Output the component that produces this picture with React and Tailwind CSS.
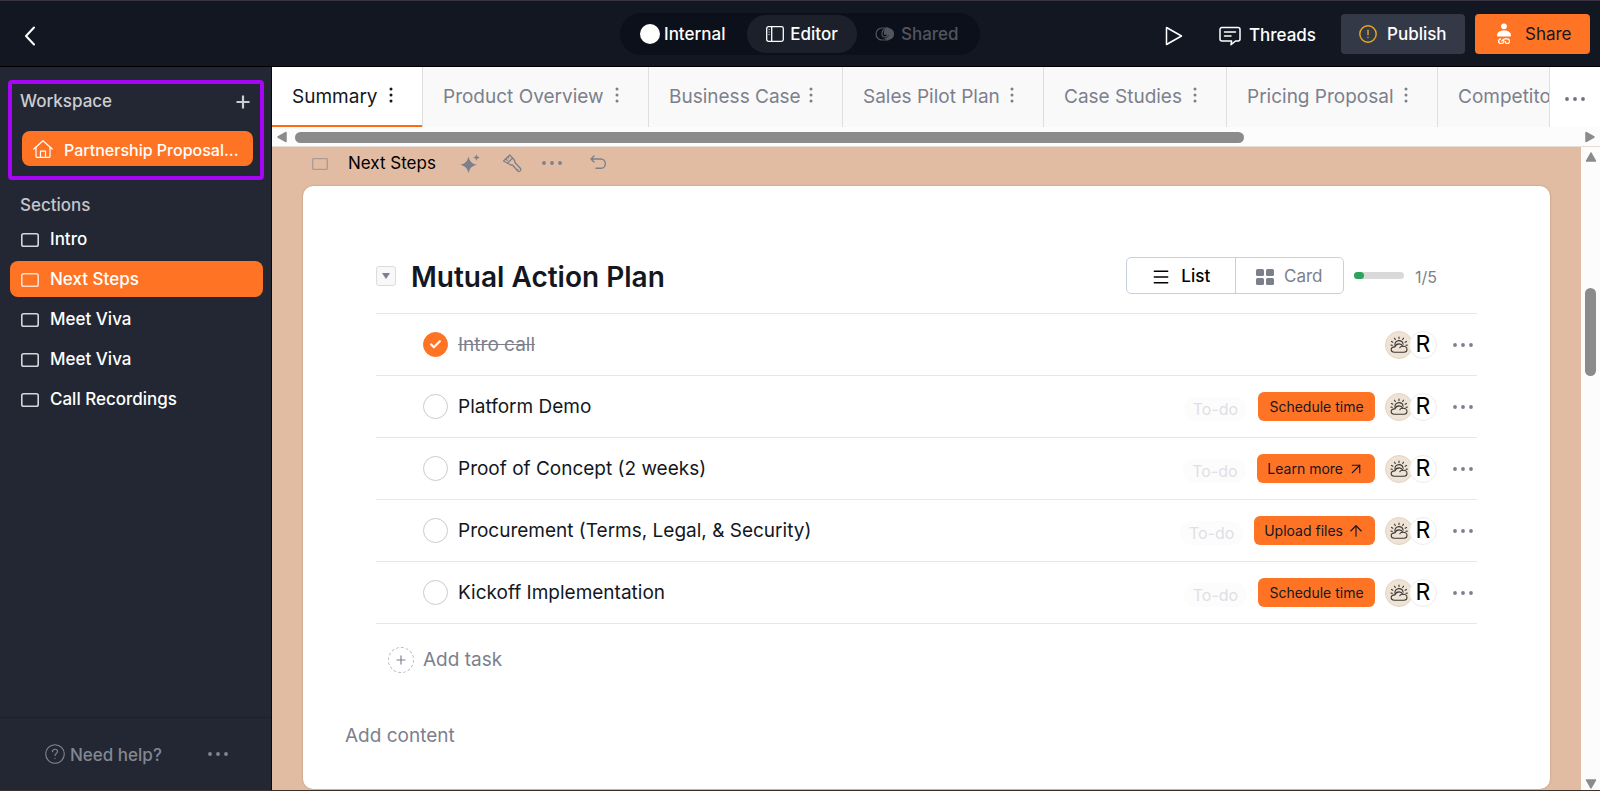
import React, { useState } from 'react';
import { Plus, Check, ArrowUpRight, ArrowUp, Menu } from 'lucide-react';
import clsx from 'clsx';

const TABS = [
  { name: 'Summary', width: 'w-[151px]' },
  { name: 'Product Overview', width: 'w-[226px]' },
  { name: 'Business Case', width: 'w-[194px]' },
  { name: 'Sales Pilot Plan', width: 'w-[201px]' },
  { name: 'Case Studies', width: 'w-[183px]' },
  { name: 'Pricing Proposal', width: 'w-[211px]' },
  { name: 'Competitors', width: 'w-[182px]' },
];

const SECTIONS = ['Intro', 'Next Steps', 'Meet Viva', 'Meet Viva', 'Call Recordings'];

const TASKS = [
  { id: 1, name: 'Intro call', done: true },
  { id: 2, name: 'Platform Demo', action: 'Schedule time' },
  { id: 3, name: 'Proof of Concept (2 weeks)', action: 'Learn more', icon: ArrowUpRight },
  { id: 4, name: 'Procurement (Terms, Legal, & Security)', action: 'Upload files', icon: ArrowUp },
  { id: 5, name: 'Kickoff Implementation', action: 'Schedule time' },
];

const Dots = ({ vertical, className }) => (
  <svg
    viewBox={vertical ? '0 0 4 16' : '0 0 20 4'}
    className={clsx('flex-shrink-0', vertical ? 'h-4 w-1' : 'h-1 w-5', className)}
    fill="currentColor"
    aria-hidden="true"
  >
    {vertical
      ? [2, 8, 14].map((y) => <circle key={y} cx="2" cy={y} r="1.5" />)
      : [2, 10, 18].map((x) => <circle key={x} cx={x} cy="2" r="1.9" />)}
  </svg>
);

const SlideIcon = ({ className }) => (
  <svg viewBox="0 0 18 14" className={clsx('h-3.5 w-[18px] flex-shrink-0', className)} fill="none" stroke="currentColor" strokeWidth="1.6" aria-hidden="true">
    <rect x="0.8" y="0.8" width="16.4" height="12.4" rx="1.8" />
  </svg>
);

const Arrow = ({ d, className }) => (
  <svg viewBox="0 0 12 12" className={clsx('h-3 w-3 flex-shrink-0', className)} fill="#8b8b8b" stroke="#8b8b8b" strokeWidth="1.5" strokeLinejoin="round" aria-hidden="true">
    <path d={d} />
  </svg>
);

const WeatherAvatar = () => (
  <svg viewBox="0 0 28 28" className="h-7 w-7" fill="none" aria-hidden="true">
    <circle cx="14" cy="14" r="13.5" fill="#efe3d6" stroke="#e3d3c3" />
    <g stroke="#3b3733" strokeWidth="1.1" strokeLinecap="round" strokeLinejoin="round">
      <path d="M9.5 21.300h9.300c2 0 3.200-1.300 3.200-3 0-2.100-1.900-3.400-4.200-3-.7-1.500-2-2.400-3.700-2.400-2 0-3.600 1.200-4.100 3-2.300-.3-3.800 1-3.800 2.700 0 1.600 1.300 2.700 3.300 2.700z" />
      <path d="M14.800 16.800c.4-.9 1.400-1.600 3-1.500" />
      <path d="M9.900 14.200c-.2-2.600 1.600-4.600 4-4.600 2.200 0 3.900 1.300 4.200 3.600" />
      <path d="M14 7.600V6M10.300 8.600l-.8-1.400M17.700 8.600l.8-1.400M7.900 11.200l-1.400-.8M20.100 11.200l1.400-.8M7.300 14.300l-1.300-.2M21 14.300l1.300-.2" />
    </g>
  </svg>
);

const Header = () => (
  <header className="flex h-[67px] flex-shrink-0 items-center justify-between border-t border-b border-t-[#3a3444] border-b-black bg-[#131722] px-2.5 text-[17px] font-medium text-white">
    <div className="flex flex-1 pt-1">
      <button aria-label="Back" className="ml-2 flex h-6 w-6 items-center justify-center">
        <svg viewBox="0 0 12 20" className="h-5 w-3" fill="none" stroke="currentColor" strokeWidth="2" strokeLinecap="round" strokeLinejoin="round" aria-hidden="true">
          <path d="M10 1.500L2 10l8 8.500" />
        </svg>
      </button>
    </div>

    <div className="flex h-[42px] items-center rounded-full bg-[#0c101a] px-0.5">
      <button className="flex h-[38px] w-[125px] items-center gap-1 pl-[18px]">
        <span className="h-5 w-5 rounded-full bg-white" />
        <span className="pt-0.5">Internal</span>
      </button>
      <button className="flex h-[38px] w-[110px] items-center justify-center gap-1.5 rounded-full bg-[#1c202b]">
        <svg viewBox="0 0 18 16" className="h-4 w-[18px]" fill="none" stroke="currentColor" strokeWidth="1.3" aria-hidden="true">
          <rect x="0.7" y="0.7" width="16.6" height="14.6" rx="1.8" />
          <path d="M5.700 0.700v14.600" />
          <path d="M2.500 3.500h1.200M2.500 6h1.200M2.500 8.500h1.200" strokeWidth="0.800" />
        </svg>
        <span className="pt-0.5">Editor</span>
      </button>
      <button className="flex h-[38px] w-[121px] items-center gap-1.5 pl-[18px] text-[#51555e]">
        <svg viewBox="0 0 20 14" className="h-3.5 w-5" fill="none" stroke="currentColor" strokeLinecap="round" aria-hidden="true">
          <path d="M13 1H7a6 6 0 0 0 0 12h6" strokeWidth="1.200" />
          <path d="M13 1a6 6 0 1 1-4 10.400c2.500.3 4.500-1.300 4.500-3.600H9.200C8.200 4.500 10 1 13 1z" fill="currentColor" stroke="none" />
          <path d="M13 1C8.500 1.200 7 4.500 7 6.500s1 3.500 2.500 3.500 3-.8 3.200-2.400" strokeWidth="1.200" />
        </svg>
        <span className="pt-0.5">Shared</span>
      </button>
    </div>

    <div className="flex flex-1 items-center justify-end">
      <button aria-label="Preview" className="mr-9 pt-1">
        <svg viewBox="0 0 18 20" className="h-5 w-[18px]" fill="none" stroke="currentColor" strokeWidth="1.500" strokeLinejoin="round" aria-hidden="true">
          <path d="M1.500 1.500v17L16.500 10z" />
        </svg>
      </button>
      <button className="mr-[25px] flex items-center gap-2 pt-1">
        <svg viewBox="0 0 22 20" className="h-5 w-[22px]" fill="none" stroke="currentColor" strokeWidth="1.500" strokeLinecap="round" strokeLinejoin="round" aria-hidden="true">
          <path d="M3 1.500h16a2 2 0 0 1 2 2v9.500a2 2 0 0 1-2 2h-2.500l-4.500 3.700.6-3.700H3a2 2 0 0 1-2-2V3.500a2 2 0 0 1 2-2z" />
          <path d="M5.500 6h11M5.500 10h6.500" />
        </svg>
        Threads
      </button>
      <button className="mr-2.5 flex h-10 w-[124px] items-center gap-2.5 rounded-[4px] bg-[#343948] pl-[18px]">
        <svg viewBox="0 0 18 18" className="h-[18px] w-[18px]" fill="none" stroke="#e8ab1c" strokeWidth="1.400" strokeLinecap="round" aria-hidden="true">
          <circle cx="9" cy="9" r="8.200" />
          <path d="M9 5.300v4.400M9 12.400v.1" />
        </svg>
        <span className="pt-0.5">Publish</span>
      </button>
      <button className="flex h-10 w-[115px] items-center gap-3.5 rounded-[4px] bg-[#ff7424] pl-[22px] font-normal text-[#131722]">
        <svg viewBox="0 0 14 22" className="h-[22px] w-3.5" fill="white" aria-hidden="true">
          <circle cx="7" cy="3.300" r="2.900" />
          <path d="M0 12.500c0-3.300 3-5 7-5s7 1.700 7 5c0 .6-.4.900-1 .9H1c-.6 0-1-.3-1-.9z" />
          <path d="M4 15.800a2.300 2.300 0 0 0 0 4.700c2.600 0 3.200-1.300 2.800-2.700-.3-1-.1-2 1.300-2h2a2.300 2.300 0 0 1 0 4.700c-1.500 0-2-.8-1.500-2.500M4.200 18.500c.9-.1 1.200-2.400 3-2.500" fill="none" stroke="white" strokeWidth="1.200" />
        </svg>
        <span className="pt-0.5">Share</span>
      </button>
    </div>
  </header>
);

const Sidebar = ({ active, onSelect }) => (
  <aside className="flex w-[272px] flex-shrink-0 flex-col border-r border-[#070a1c] bg-[#222733] pt-[13px] text-[17px]">
    {/* Workspace */}
    <div className="ml-2 mr-[7px] h-[100px] rounded-[4px] border-4 border-[#a606f5] px-2 pr-2">
      <div className="flex h-9 items-center justify-between text-[#cbcdd1]">
        <span className="font-medium">Workspace</span>
        <button aria-label="Add page">
          <svg viewBox="0 0 14 14" className="mr-0.5 h-3.5 w-3.5" stroke="currentColor" strokeWidth="2.200" aria-hidden="true">
            <path d="M7 0.500v13M0.500 7h13" />
          </svg>
        </button>
      </div>
      <button className="ml-0.5 mt-[11px] flex h-[35px] w-[231px] items-center gap-[11px] rounded-lg bg-[#ff7424] px-[11px] text-white">
        <svg viewBox="0 0 20 18" className="h-[18px] w-5 flex-shrink-0" fill="none" stroke="currentColor" strokeWidth="1.200" strokeLinecap="round" strokeLinejoin="round" aria-hidden="true">
          <path d="M0.800 9L10 0.800 19.200 9" />
          <path d="M3 7.200v9.300c0 .5.300.8.800.8h12.400c.5 0 .8-.3.800-.8V7.200" />
          <path d="M7.500 17.200v-6h5v6" />
        </svg>
        <span className="whitespace-nowrap pt-0.5 text-base font-medium">Partnership Proposal...</span>
      </button>
    </div>

    {/* Sections */}
    <div className="px-5 pt-3 font-medium leading-[26px] text-[#c3c5ca]">Sections</div>
    <nav className="mt-[3px] flex flex-col gap-1 pl-2.5 pr-2">
      {SECTIONS.map((name, i) => (
        <button
          key={i}
          onClick={() => onSelect(i)}
          className={clsx('flex h-9 items-center gap-[11px] rounded-lg px-[11px] pt-0.5 font-medium text-white', active === i && 'bg-[#ff7424]')}
        >
          <SlideIcon className={active === i ? 'text-[#ffdcc8]' : 'text-[#d4d6da]'} />
          {name}
        </button>
      ))}
    </nav>

    <div className="mt-auto flex h-[73px] items-center justify-between border-t border-[#1c202b] pl-[45px] pr-[43px] text-[#828792]">
      <button className="flex items-center gap-[5px] font-medium">
        <svg viewBox="0 0 20 20" className="h-5 w-5" fill="none" stroke="currentColor" strokeWidth="1.100" strokeLinecap="round" aria-hidden="true">
          <circle cx="10" cy="10" r="9.300" />
          <path d="M7.500 7.800C7.500 6.200 8.600 5.300 10 5.300s2.500 1 2.500 2.300c0 1.900-2.500 2-2.500 4M10 14.300v.1" />
        </svg>
        <span className="pt-1">Need help?</span>
      </button>
      <button aria-label="More help"><Dots /></button>
    </div>
  </aside>
);

const TabBar = () => (
  <div className="flex-shrink-0 border-b border-[#e4ddd8] bg-[#fcfcfc]">
    <div className="flex h-[60px]">
      <div role="tablist" className="flex min-w-0 flex-1 overflow-hidden">
        {TABS.map((tab, i) => (
          <button
            key={tab.name}
            role="tab"
            aria-selected={i === 0}
            className={clsx(
              'flex flex-shrink-0 items-center justify-between border-r border-[#dedede] pb-1 pl-5 pr-[29px] text-[19px]',
              tab.width,
              i === 0 ? 'bg-white text-[#131722] shadow-[inset_0_-2px_0_#ff6a0c]' : 'bg-[#f9f9f9] text-[#7c808d]'
            )}
          >
            <span className="whitespace-nowrap pt-1">{tab.name}</span>
            <Dots vertical />
          </button>
        ))}
      </div>
      <button aria-label="More pages" className="flex w-[51px] items-center justify-center border-l border-[#dedede] bg-white pt-1 text-[#6e7382]">
        <Dots />
      </button>
    </div>
    <div className="flex h-[19px] items-center justify-between px-1 pt-px">
      <Arrow d="M10 1.500v9L2 6z" />
      <div className="mx-[7px] flex-1">
        <div className="h-[11px] w-[74%] rounded-full bg-[#8b8b8b]" />
      </div>
      <Arrow d="M2 1.500v9L10 6z" />
    </div>
  </div>
);

const SectionToolbar = () => (
  <div className="flex h-[39px] items-center pb-1.5 pl-[9px] text-[#7c808d]">
    <svg viewBox="0 0 16 12" className="h-3 w-4" fill="none" stroke="#ab9a95" strokeWidth="1.300" aria-hidden="true">
      <rect x="0.700" y="0.700" width="14.600" height="10.600" rx="0.500" />
    </svg>
    <span className="ml-5 w-[86px] whitespace-nowrap text-[17px] text-black">Next Steps</span>
    <button aria-label="Generate" className="ml-[26px]">
      <svg viewBox="0 0 20 20" className="h-5 w-5" fill="currentColor" aria-hidden="true">
        <path d="M8.500 2.500c1.200 5 3.200 7 8.300 8.300-5.100 1.300-7.100 3.300-8.300 8.500C7.300 14.100 5.300 12.100 0.200 10.800 5.300 9.500 7.300 7.500 8.500 2.500z" />
        <path d="M16.500 0c.5 2.300 1.200 3 3.500 3.500-2.300.5-3 1.200-3.500 3.500-.5-2.300-1.200-3-3.500-3.500 2.300-.5 3-1.200 3.500-3.500z" />
      </svg>
    </button>
    <button aria-label="Style" className="ml-[22px]">
      <svg viewBox="0 0 20 20" className="h-5 w-5" fill="none" stroke="currentColor" strokeWidth="1.300" strokeLinecap="round" strokeLinejoin="round" aria-hidden="true">
        <path d="M1.500 7L7.800 1l4.700 5.300c.6.800.1 1.700.6 2.500l5 5.200c1.800 2.200-.6 4.500-2.600 2.800l-4.800-5.500c-.8-.6-1.800 0-2.600-.8z" />
        <path d="M5.800 8.700l4.900-4.600M3.900 4.800l1.400 1.600M5.900 2.900l.9 1" />
        <path d="M15.800 15.400v.1" />
      </svg>
    </button>
    <button aria-label="More options" className="ml-5 pb-0.5"><Dots className="block" /></button>
    <button aria-label="Undo" className="ml-7">
      <svg viewBox="0 0 18 18" className="h-[18px] w-[18px]" fill="none" stroke="currentColor" strokeWidth="1.400" strokeLinecap="round" strokeLinejoin="round" aria-hidden="true">
        <path d="M4 1L1 4l3 3M1 4h9.700a4.500 4.500 0 0 1 0 9.300H6" />
      </svg>
    </button>
  </div>
);

const TaskRow = ({ task }) => {
  const Icon = task.icon;

  return (
    <li className="flex h-[62px] items-center border-b border-[#e6e7e9] pl-[47px] pr-1">
      <span className="relative h-[25px] w-[25px] flex-shrink-0">
        <input
          id={`task-${task.id}`}
          type="checkbox"
          defaultChecked={task.done}
          className="peer block h-[25px] w-[25px] appearance-none rounded-full border border-[#c9cbd0] checked:border-[#ff7424] checked:bg-[#ff7424]"
        />
        <Check className="pointer-events-none absolute left-1.5 top-1.5 hidden h-[13px] w-[13px] text-white peer-checked:block" strokeWidth={4} />
      </span>
      <label
        htmlFor={`task-${task.id}`}
        className={clsx('ml-2.5 flex-1 pt-0.5 text-[19px]', task.done ? 'text-[#7c808d] line-through' : 'text-[#131722]')}
      >
        {task.name}
      </label>

      {task.action && (
        <>
          <span className="mr-[11px] mt-1 flex h-6 w-[63px] items-center justify-center rounded-full bg-[#fcfcfc] text-base text-[#dfe0e5]">
            To-do
          </span>
          <button className="mr-2.5 flex h-[29px] min-w-[117px] items-center justify-center gap-1 whitespace-nowrap rounded-md bg-[#ff7424] px-2.5 text-sm text-[#131722]">
            {task.action}
            {Icon && <Icon className="h-[18px] w-[18px]" strokeWidth={1.500} />}
          </button>
        </>
      )}

      <span className="flex">
        <WeatherAvatar />
        <span className="-ml-1 flex h-7 w-7 items-center justify-center rounded-full border border-[#ededed] bg-white text-[23px] text-black">
          R
        </span>
      </span>
      <button aria-label={`Options for ${task.name}`} className="ml-4 text-[#7c808d]"><Dots className="block" /></button>
    </li>
  );
};

const ActionPlan = () => (
  <section className="mx-[73px] pt-[71px]">
    <div className="flex h-[57px] items-start border-b border-[#e6e7e9]">
      <button aria-label="Collapse plan" className="mt-[9px] flex h-5 w-5 items-center justify-center rounded-[3px] border border-[#dcdcdf] bg-[#f8f8f8]">
        <svg viewBox="0 0 8 6" className="h-1.5 w-2" fill="#7c808d" aria-hidden="true"><path d="M0 0h8L4 6z" /></svg>
      </button>
      <h1 className="ml-[15px] flex-1 text-[28px] font-semibold leading-10 text-[#131722]">Mutual Action Plan</h1>

      <div className="flex h-[37px] w-[218px] rounded-[5px] border border-[#c9cfe0] text-[17px]">
        <button className="flex flex-1 items-center justify-center gap-2.5 border-r border-[#c9cfe0] pt-0.5 font-medium text-black">
          <Menu className="h-5 w-5" strokeWidth={1.8} />
          List
        </button>
        <button className="flex flex-1 items-center justify-center gap-2.5 pt-0.5 text-[#7c808d]">
          <svg viewBox="0 0 18 16" className="h-4 w-[18px]" fill="currentColor" aria-hidden="true">
            <rect width="8" height="7" rx="1.500" />
            <rect x="10" width="8" height="7" rx="1.500" />
            <rect y="9" width="8" height="7" rx="1.500" />
            <rect x="10" y="9" width="8" height="7" rx="1.500" />
          </svg>
          Card
        </button>
      </div>
      <div className="ml-2.5 mt-[15px] h-[7px] w-[50px] rounded-full bg-[#d9d9d9]">
        <div className="h-full w-1/5 rounded-full bg-[#2ca45c]" />
      </div>
      <span className="ml-[11px] mr-10 text-base leading-10 text-[#7c808d]">1/5</span>
    </div>

    <ul>
      {TASKS.map((task) => <TaskRow key={task.id} task={task} />)}
    </ul>

    <button className="ml-3 mt-[22px] flex items-center gap-[9px] text-[19px] text-[#7c808d]">
      <span className="flex h-[26px] w-[26px] items-center justify-center rounded-full border border-dashed border-[#b9bbc1]">
        <Plus className="h-3.5 w-3.5" strokeWidth={2} />
      </span>
      Add task
    </button>
  </section>
);

const App = () => {
  const [active, setActive] = useState(1);

  return (
    <div className="flex h-screen flex-col overflow-hidden border-b border-[#3b2f2c] font-['Inter',sans-serif]">
      <Header />
      <div className="flex min-h-0 flex-1">
        <Sidebar active={active} onSelect={setActive} />
        <div className="flex min-w-0 flex-1 flex-col">
          <TabBar />
          <div className="flex min-h-0 flex-1">
            <main className="flex min-w-0 flex-1 flex-col bg-[#e1bca2] px-[31px]">
              <SectionToolbar />
              <div className="mb-px flex-1 rounded-[10px] bg-white shadow-[0_0_2px_#b08a70]">
                <ActionPlan />
                <button className="ml-[42px] mt-[47px] text-[19px] text-[#7c808d]">Add content</button>
              </div>
            </main>
            <div className="flex w-[19px] flex-shrink-0 flex-col items-center justify-between bg-[#fcfcfc] pt-1">
              <Arrow d="M1.500 10h9L6 2z" />
              <div className="w-[11px] flex-1 pt-[125px]">
                <div className="h-[88px] rounded-full bg-[#8b8b8b]" />
              </div>
              <Arrow d="M1.500 2h9L6 10z" />
            </div>
          </div>
        </div>
      </div>
    </div>
  );
};

export default App;
